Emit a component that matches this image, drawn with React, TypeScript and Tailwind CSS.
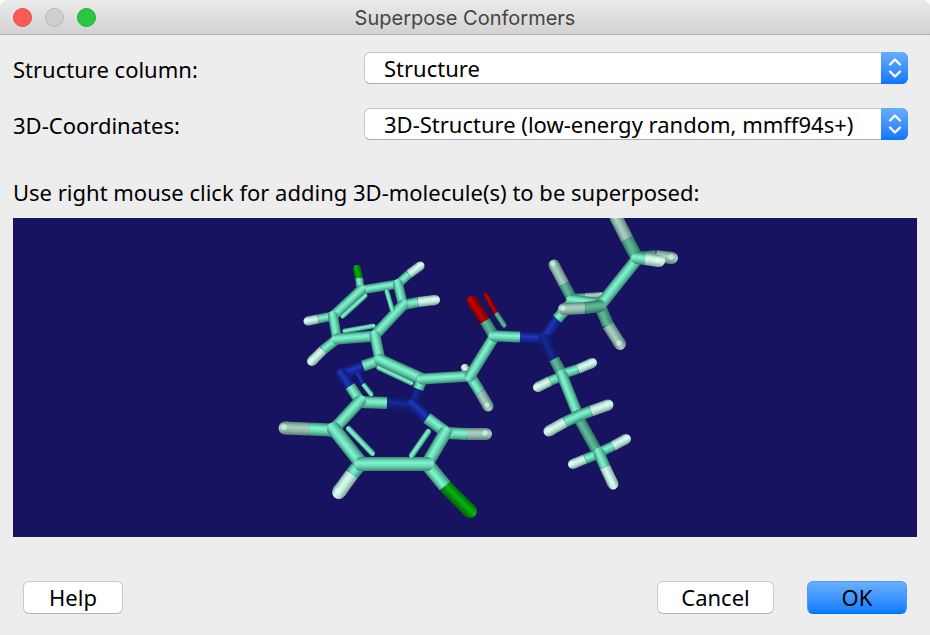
import { useId, type ReactNode } from "react";

type Point = [number, number];
type Tone = { edge: string; body: string; shine: string };

const tones = {
  carbon: { edge: "#3a8570", body: "#66d3b0", shine: "#80f5d2" },
  dim: { edge: "#30705d", body: "#4fa387", shine: "#5fba9b" },
  hydrogen: { edge: "#7d9f95", body: "#b8e6d8", shine: "#dcfbf1" },
  shaded: { edge: "#5c7d73", body: "#8fb9ac", shine: "#abd0c4" },
  nitrogen: { edge: "#101c78", body: "#152799", shine: "#2039b8" },
  deep: { edge: "#0e1967", body: "#12207f", shine: "#182a90" },
  oxygen: { edge: "#690404", body: "#a30000", shine: "#c40505" },
  chlorine: { edge: "#07600f", body: "#039208", shine: "#07b50b" },
} satisfies Record<string, Tone>;

type ToneName = keyof typeof tones;

type StickProps = {
  from: Point;
  to: Point;
  tone?: ToneName;
  width?: number;
  cap?: "round" | "butt";
};

/* One cylinder, shaded across its width. */
function Stick({ from, to, tone = "carbon", width = 10, cap = "round" }: StickProps) {
  const id = useId();
  const [x1, y1] = from;
  const [x2, y2] = to;
  const length = Math.hypot(x2 - x1, y2 - y1);
  let nx = -(y2 - y1) / length;
  let ny = (x2 - x1) / length;
  if (nx + ny < 0) {
    nx = -nx;
    ny = -ny;
  }
  const half = width / 2;
  const color = tones[tone];
  return (
    <>
      <linearGradient
        id={id}
        gradientUnits="userSpaceOnUse"
        x1={x1 - nx * half}
        y1={y1 - ny * half}
        x2={x1 + nx * half}
        y2={y1 + ny * half}
      >
        <stop offset="0" stopColor={color.edge} />
        <stop offset="0.22" stopColor={color.body} />
        <stop offset="0.42" stopColor={color.shine} />
        <stop offset="0.68" stopColor={color.body} />
        <stop offset="1" stopColor={color.edge} />
      </linearGradient>
      <line x1={x1} y1={y1} x2={x2} y2={y2} stroke={`url(#${id})`} strokeWidth={width} strokeLinecap={cap} />
    </>
  );
}

type BondProps = {
  from: Point;
  mid: Point;
  to: Point;
  start?: ToneName;
  end: ToneName;
  width?: number;
};

/* A bond between two elements: each half takes the colour of its atom. */
function Bond({ from, mid, to, start = "carbon", end, width = 10 }: BondProps) {
  const nearMid = (p: Point): Point => [p[0] * 0.9 + mid[0] * 0.1, p[1] * 0.9 + mid[1] * 0.1];
  return (
    <>
      <Stick from={to} to={nearMid(to)} tone={end} width={width} />
      <Stick from={from} to={nearMid(from)} tone={start} width={width} />
      <Stick from={mid} to={to} tone={end} width={width} cap="butt" />
      <Stick from={from} to={mid} tone={start} width={width} cap="butt" />
      {(end === "hydrogen" || end === "shaded") && (
        <circle cx={to[0] - 1} cy={to[1] - 1} r={width * 0.22} fill="#e2fff5" opacity="0.6" />
      )}
    </>
  );
}

function Molecule() {
  return (
    <svg viewBox="13 218 904 319" className="block w-full" role="img" aria-label="3D molecule">
      {/* chlorophenyl ring */}
      <Bond from={[361, 291]} mid={[359, 278]} to={[357, 269]} end="chlorine" width={8} />
      <Bond from={[398, 284]} mid={[409, 274]} to={[420, 266]} end="hydrogen" width={9} />
      <Bond from={[403, 305]} mid={[418, 302]} to={[435, 300]} end="hydrogen" width={10} />
      <Bond from={[333, 316]} mid={[318, 319]} to={[308, 321]} end="hydrogen" width={9} />
      <Bond from={[337, 339]} mid={[323, 350]} to={[312, 361]} end="hydrogen" width={10} />
      <Stick from={[361, 290]} to={[398, 284]} width={9} />
      <Stick from={[361, 290]} to={[333, 316]} width={10} />
      <Stick from={[333, 316]} to={[337, 339]} width={10} />
      <Stick from={[398, 284]} to={[403, 305]} width={10} />
      <Stick from={[337, 339]} to={[375, 336]} width={11} />
      <Stick from={[403, 305]} to={[375, 335]} width={11} />
      <Stick from={[365, 296]} to={[343, 316]} width={5} />
      <Stick from={[387, 292]} to={[392, 309]} width={5} />
      <Stick from={[345, 331]} to={[373, 326]} width={5} />
      <Stick from={[375, 336]} to={[380, 360]} width={11} />

      {/* five-membered ring */}
      <Bond from={[380, 360]} mid={[363, 366]} to={[342, 374]} end="nitrogen" width={11} />
      <Bond from={[360, 401]} mid={[350, 386]} to={[342, 374]} end="nitrogen" width={11} />
      <Bond from={[371, 394]} mid={[363, 384]} to={[358, 374]} end="nitrogen" width={5} />
      <Stick from={[380, 360]} to={[422, 379]} width={12} />
      <Stick from={[379, 368]} to={[411, 383]} width={5} />
      <Bond from={[422, 379]} mid={[418, 389]} to={[413, 404]} end="deep" width={11} />
      <Bond from={[360, 402]} mid={[387, 403]} to={[413, 405]} end="deep" width={12} />

      {/* fused six-membered ring */}
      <Bond from={[332, 430]} mid={[309, 429]} to={[285, 428]} end="shaded" width={13} />
      <Bond from={[361, 463]} mid={[352, 474]} to={[339, 492]} end="hydrogen" width={14} />
      <Bond from={[447, 433]} mid={[467, 434]} to={[486, 434]} end="shaded" width={12} />
      <Bond from={[447, 433]} mid={[427, 418]} to={[413, 405]} end="nitrogen" width={12} />
      <Bond from={[427, 464]} mid={[445, 486]} to={[470, 511]} end="chlorine" width={14} />
      <Stick from={[360, 401]} to={[334, 429]} width={12} />
      <Stick from={[334, 429]} to={[361, 463]} width={14} />
      <Stick from={[445, 433]} to={[427, 464]} width={13} />
      <Stick from={[361, 464]} to={[427, 464]} width={14} />
      <Stick from={[349, 429]} to={[372, 453]} width={6} />
      <Stick from={[428, 432]} to={[412, 455]} width={6} />

      {/* amide linker */}
      <Stick from={[470, 376]} to={[465, 368]} tone="hydrogen" width={8} />
      <Bond from={[470, 376]} mid={[480, 392]} to={[488, 406]} end="shaded" width={11} />
      <Stick from={[422, 379]} to={[470, 376]} width={11} />
      <Bond from={[494, 336]} mid={[485, 321]} to={[472, 301]} start="dim" end="oxygen" width={11} />
      <Bond from={[504, 325]} mid={[496, 313]} to={[486, 295]} start="dim" end="oxygen" width={5} />
      <Stick from={[470, 376]} to={[494, 337]} width={11} />
      <Bond from={[494, 336]} mid={[520, 337]} to={[543, 338]} end="nitrogen" width={11} />

      {/* upper propyl chain */}
      <Bond from={[572, 302]} mid={[557, 319]} to={[544, 338]} end="nitrogen" width={11} />
      <Bond from={[572, 299]} mid={[564, 284]} to={[554, 265]} start="dim" end="shaded" width={11} />
      <Bond from={[572, 297]} mid={[585, 296]} to={[602, 295]} start="dim" end="shaded" width={6} />
      <Bond from={[600, 306]} mid={[608, 325]} to={[620, 344]} start="dim" end="shaded" width={12} />
      <Stick from={[572, 300]} to={[600, 304]} width={11} />
      <Bond from={[637, 258]} mid={[627, 239]} to={[616, 217]} start="dim" end="shaded" width={13} />
      <Bond from={[637, 258]} mid={[656, 256]} to={[672, 258]} start="dim" end="shaded" width={12} />
      <Stick from={[602, 303]} to={[637, 259]} width={12} />
      <Bond from={[637, 258]} mid={[645, 259]} to={[659, 261]} end="hydrogen" width={12} />
      <Bond from={[600, 306]} mid={[585, 308]} to={[564, 309]} start="dim" end="shaded" width={12} />

      {/* lower propyl chain */}
      <Bond from={[562, 374]} mid={[554, 359]} to={[545, 340]} start="dim" end="deep" width={11} />
      <Bond from={[562, 374]} mid={[578, 369]} to={[592, 363]} end="hydrogen" width={10} />
      <Bond from={[562, 376]} mid={[550, 381]} to={[538, 387]} end="hydrogen" width={10} />
      <Stick from={[562, 375]} to={[578, 415]} width={11} />
      <Stick from={[578, 417]} to={[598, 453]} tone="dim" width={11} />
      <Bond from={[578, 416]} mid={[591, 411]} to={[608, 405]} end="hydrogen" width={11} />
      <Bond from={[578, 416]} mid={[565, 422]} to={[549, 431]} end="hydrogen" width={11} />
      <Bond from={[598, 453]} mid={[613, 446]} to={[626, 439]} end="hydrogen" width={10} />
      <Bond from={[598, 454]} mid={[585, 459]} to={[573, 464]} end="hydrogen" width={10} />
      <Bond from={[599, 453]} mid={[605, 467]} to={[613, 484]} end="hydrogen" width={11} />
    </svg>
  );
}

function SelectRow({ id, label, value }: { id: string; label: string; value: string }) {
  return (
    <div className="flex items-center">
      <label htmlFor={id} className="w-[351px] shrink-0 pt-0.5">
        {label}
      </label>
      <div className="relative h-8 flex-1">
        <select
          id={id}
          defaultValue={value}
          className="block h-8 w-full appearance-none rounded-md border border-[#c6c6c6] border-b-[#acacac] bg-white pr-8 pb-px pl-[19px] text-black outline-none"
        >
          <option>{value}</option>
        </select>
        <span className="pointer-events-none absolute inset-y-0 right-0 flex w-[27px] items-center justify-center rounded-r-md bg-linear-to-b from-[#66aefc] to-[#0a75fb]">
          <svg
            viewBox="0 0 14 22"
            className="h-[22px] w-3.5"
            fill="none"
            stroke="white"
            strokeWidth="2.4"
            strokeLinecap="round"
            strokeLinejoin="round"
            aria-hidden="true"
          >
            <path d="M2 7.5 L7 2.5 L12 7.5 M2 14.5 L7 19.5 L12 14.5" />
          </svg>
        </span>
      </div>
    </div>
  );
}

function PushButton({ children, className }: { children: ReactNode; className: string }) {
  return (
    <button type="button" className={`h-[33px] rounded-md border pb-px ${className}`}>
      {children}
    </button>
  );
}

export default function App() {
  return (
    <div className="min-h-screen bg-white">
      <main className="flex min-h-screen flex-col overflow-hidden rounded-t-lg bg-[#ededed] font-['Noto_Sans','Open_Sans',sans-serif] text-[22px] leading-7 text-black">
        <header className="grid h-[35px] grid-cols-[1fr_auto_1fr] items-center border-b border-[#b0b0b0] bg-linear-to-b from-[#ebebeb] to-[#d2d2d2] px-[13px]">
          <div className="flex gap-[13px]">
            <button type="button" aria-label="Close" className="size-[19px] rounded-full border border-[#e2463f] bg-[#fc5b57]" />
            <button type="button" aria-label="Minimize" className="size-[19px] rounded-full border border-[#b7b7b7] bg-[#cfcfcf]" />
            <button type="button" aria-label="Zoom" className="size-[19px] rounded-full border border-[#1dae34] bg-[#27c840]" />
          </div>
          <h1 className="pt-0.5 font-[Inter,Roboto,sans-serif] text-[20px] leading-7 text-[#454545]">Superpose Conformers</h1>
        </header>

        <div className="px-[13px] pt-[17px]">
          <div className="flex flex-col gap-6 pr-[9px]">
            <SelectRow id="structure-column" label="Structure column:" value="Structure" />
            <SelectRow id="coordinates" label="3D-Coordinates:" value="3D-Structure (low-energy random, mmff94s+)" />
          </div>
          <p className="mt-[38px]">Use right mouse click for adding 3D-molecule(s) to be superposed:</p>
          <div className="mt-3 bg-[#171361]">
            <Molecule />
          </div>
        </div>

        <footer className="mt-11 flex gap-[33px] pr-[23px] pl-[23px]">
          <PushButton className="mr-auto w-[100px] border-[#c9c9c9] border-b-[#b4b4b4] bg-white">Help</PushButton>
          <PushButton className="w-[117px] border-[#c9c9c9] border-b-[#b4b4b4] bg-white">Cancel</PushButton>
          <PushButton className="w-[100px] border-[#4a9bf5] border-b-[#0a6cf0] bg-linear-to-b from-[#66b0ff] to-[#067bff]">OK</PushButton>
        </footer>
      </main>
    </div>
  );
}
